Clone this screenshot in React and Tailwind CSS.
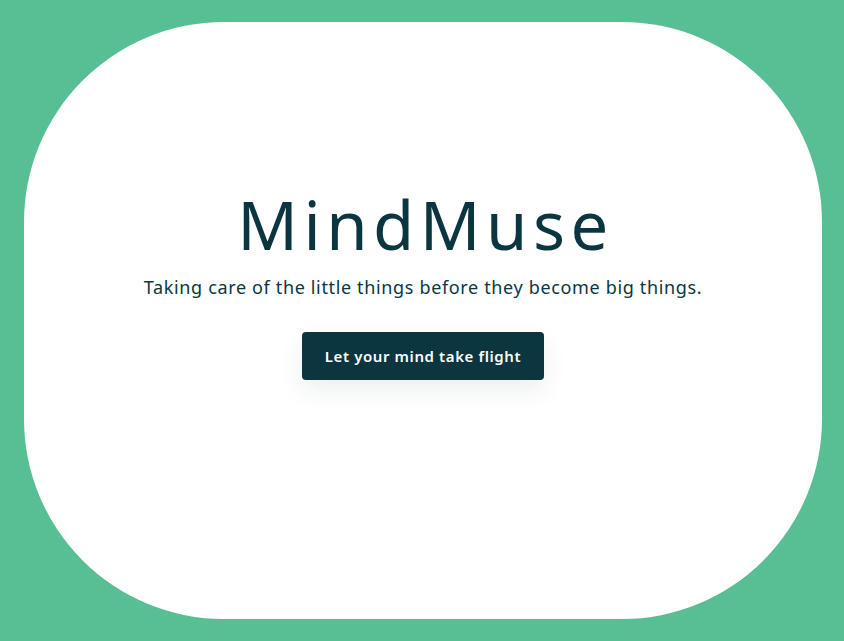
import React from 'react'

export default function App() {
  return (
    <div className="w-full h-[641px] bg-[#58be93] p-[22px] pl-[24px] pr-[22px]">
      <div className="w-full h-full bg-white rounded-[200px] flex flex-col items-center pt-[161px]" style={{ fontFamily: '"Noto Sans", sans-serif' }}>
        <h1 className="text-[67px] leading-[82px] font-normal text-[#0b3640] tracking-[5.5px] pl-[5px]">MindMuse</h1>
        <p className="mt-[9px] text-[18px] leading-[26px] text-[#0b3640] tracking-[0.65px]">Taking care of the little things before they become big things.</p>
        <button className="mt-[32px] w-[242px] h-[48px] rounded-[4px] bg-[#0b3640] text-white text-[15px] font-semibold tracking-[0.6px] shadow-[0_10px_25px_rgba(11,54,64,0.08)]">
          Let your mind take flight
        </button>
      </div>
    </div>
  )
}
